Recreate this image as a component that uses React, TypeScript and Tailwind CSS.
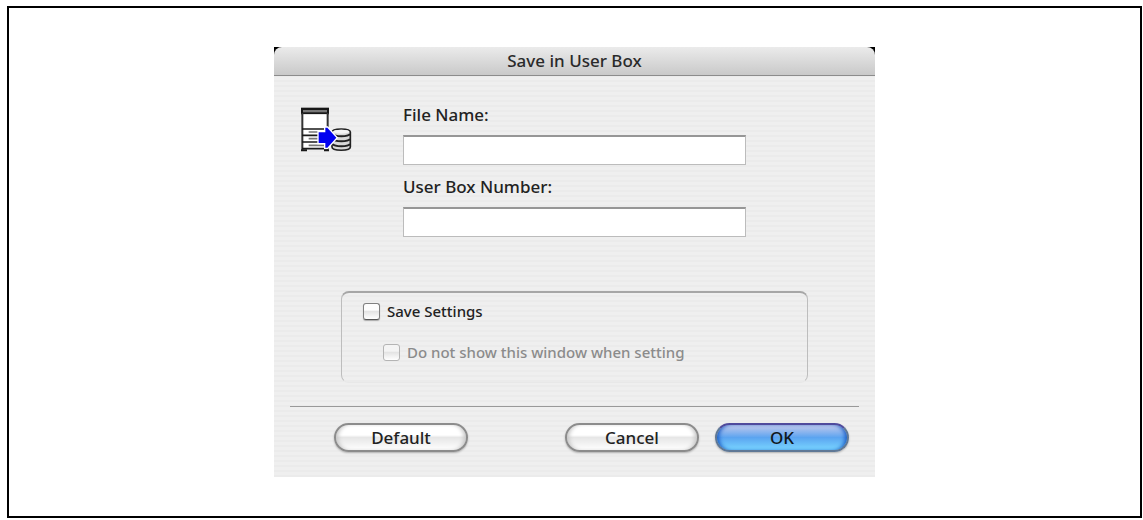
import React, { useState } from 'react';

const PrinterToBoxIcon: React.FC = () => (
  <svg viewBox="30 36 156 135" className="w-[52px] h-[45px] shrink-0" aria-hidden="true">
    {/* printer */}
    <rect x="33" y="38" width="84" height="20" fill="#161616" />
    <rect x="39" y="45" width="72" height="7" fill="#777777" />
    <rect x="36" y="58" width="78" height="104" fill="#ffffff" />
    <path d="M37 54V164M113 54V164" stroke="#333333" strokeWidth="6" fill="none" />
    <path d="M36 102H114M36 121H114M36 141H114M36 161H114" stroke="#1a1a1a" strokeWidth="5" />
    <path d="M56 111H84M56 131H84M56 151H112" stroke="#777777" strokeWidth="5" />
    <path d="M33 166H51M102 166H117" stroke="#1a1a1a" strokeWidth="6" />
    {/* stacked discs */}
    <path d="M126 111C126 99 181 99 181 111V156C181 169 126 169 126 156Z" fill="#d8d8d8" stroke="#222222" strokeWidth="5" />
    <ellipse cx="154" cy="110" rx="24" ry="6" fill="#f4f4f4" />
    <path d="M128 117C134 126 174 126 180 117M128 132C134 141 174 141 180 132M128 147C134 156 174 156 180 147" stroke="#222222" strokeWidth="6" fill="none" />
    {/* arrow */}
    <path d="M86 112H106V98H112L139 128L112 158H106V144H86Z" fill="#0000f0" stroke="#ffffff" strokeWidth="8" paintOrder="stroke" />
  </svg>
);

interface TextFieldProps {
  id: string;
  label: string;
  value: string;
  onChange: (value: string) => void;
}

const TextField: React.FC<TextFieldProps> = ({ id, label, value, onChange }) => (
  <div className="flex flex-col gap-2">
    <label htmlFor={id} className="text-[17px] leading-6 text-[#222222]">{label}</label>
    <input
      id={id}
      type="text"
      value={value}
      onChange={e => onChange(e.target.value)}
      className="w-full h-[30px] px-2 bg-white border border-t-2 border-[#bcbcbc] border-t-[#969696] outline-none text-[17px]"
    />
  </div>
);

interface CheckBoxProps {
  id: string;
  label: string;
  checked: boolean;
  disabled?: boolean;
  onChange: (checked: boolean) => void;
}

const CheckBox: React.FC<CheckBoxProps> = ({ id, label, checked, disabled, onChange }) => (
  <div className="flex items-center gap-[7px]">
    <input
      id={id}
      type="checkbox"
      checked={checked}
      disabled={disabled}
      onChange={e => onChange(e.target.checked)}
      className="peer appearance-none size-[17px] shrink-0 rounded-[3px] border border-[#808080] border-b-[#555555] bg-linear-to-b from-[#fdfdfd] from-40% via-[#e4e4e4] via-50% to-white shadow-[0_1px_1px_#aaaaaa] checked:bg-[#4a8fe0] disabled:border-[#b4b4b4] disabled:shadow-none disabled:from-[#f4f4f4]"
    />
    <label htmlFor={id} className="text-[15px] leading-5 text-[#222222] peer-disabled:text-[#8b8b8b]">{label}</label>
  </div>
);

interface PushButtonProps {
  label: string;
  primary?: boolean;
  onClick?: () => void;
}

const PushButton: React.FC<PushButtonProps> = ({ label, primary, onClick }) => (
  <button
    type={primary ? 'submit' : 'button'}
    onClick={onClick}
    className={
      primary
        ? 'w-[134px] h-[29px] rounded-full border-2 border-[#5f7896] border-t-[#4f4a9c] text-[17px] leading-6 font-medium text-[#101820] bg-linear-to-b from-[#c0c8ea] via-[#5ba4f0] via-50% to-[#7ad6ff] shadow-[inset_4px_0_4px_-2px_#1c5cc4,inset_-4px_0_4px_-2px_#1c5cc4,0_1px_2px_#b0b0b0] flex items-center justify-center'
        : 'w-[134px] h-[29px] rounded-full border-2 border-[#8c8c8c] text-[17px] leading-6 font-medium text-[#222222] bg-linear-to-b from-white from-40% via-[#e6e6e6] via-50% to-white shadow-[inset_4px_0_4px_-2px_#c4c4c4,inset_-4px_0_4px_-2px_#c4c4c4,0_1px_2px_#b0b0b0] flex items-center justify-center'
    }
  >
    {label}
  </button>
);

const App: React.FC = () => {
  const [fileName, setFileName] = useState('');
  const [boxNumber, setBoxNumber] = useState('');
  const [saveSettings, setSaveSettings] = useState(false);
  const [hideWindow, setHideWindow] = useState(false);

  const handleDefault = () => {
    setFileName('');
    setBoxNumber('');
    setSaveSettings(false);
    setHideWindow(false);
  };

  return (
    <div className="bg-white pt-1.5 pb-0.5 pl-[7px] pr-px font-['Noto_Sans',sans-serif] font-medium">
      <main className="border-2 border-black pt-[39px] pb-[39px] flex justify-center">
        <form
          onSubmit={e => e.preventDefault()}
          aria-labelledby="dialog-title"
          className="w-full max-w-[601px] bg-[repeating-linear-gradient(to_bottom,#efefef_0px,#efefef_3px,#ebebeb_3px,#ebebeb_5px)]"
        >
          <header className="bg-black">
            <h1
              id="dialog-title"
              className="h-[29px] rounded-t-lg border-b border-[#8c8c8c] bg-linear-to-b from-[#ebebeb] to-[#c9c9c9] text-center text-[17px] leading-7 font-medium text-[#2a2a2a]"
            >
              Save in User Box
            </h1>
          </header>

          <div className="px-4 pt-[27px] pb-[25px]">
            <div className="flex items-start pl-2.5">
              <div className="pt-1 w-[103px] shrink-0">
                <PrinterToBoxIcon />
              </div>
              <div className="flex flex-col gap-2.5 grow max-w-[343px]">
                <TextField id="file-name" label="File Name:" value={fileName} onChange={setFileName} />
                <TextField id="box-number" label="User Box Number:" value={boxNumber} onChange={setBoxNumber} />
              </div>
            </div>

            <div className="mt-[54px] ml-[51px] mr-[51px] h-[92px] pt-2 pl-[21px] rounded-lg border border-t-2 border-x-[#bdbdbd] border-t-[#a6a6a6] border-b-[#e8e8e8] flex flex-col gap-[21px]">
              <CheckBox id="save-settings" label="Save Settings" checked={saveSettings} onChange={setSaveSettings} />
              <div className="pl-5">
                <CheckBox
                  id="hide-window"
                  label="Do not show this window when setting"
                  checked={hideWindow}
                  disabled={!saveSettings}
                  onChange={setHideWindow}
                />
              </div>
            </div>

            <hr className="mt-[23px] mb-4 border-t border-[#999999]" />

            <div className="flex justify-between pl-11 pr-2.5">
              <PushButton label="Default" onClick={handleDefault} />
              <div className="flex gap-4">
                <PushButton label="Cancel" />
                <PushButton label="OK" primary />
              </div>
            </div>
          </div>
        </form>
      </main>
    </div>
  );
};

export default App;
